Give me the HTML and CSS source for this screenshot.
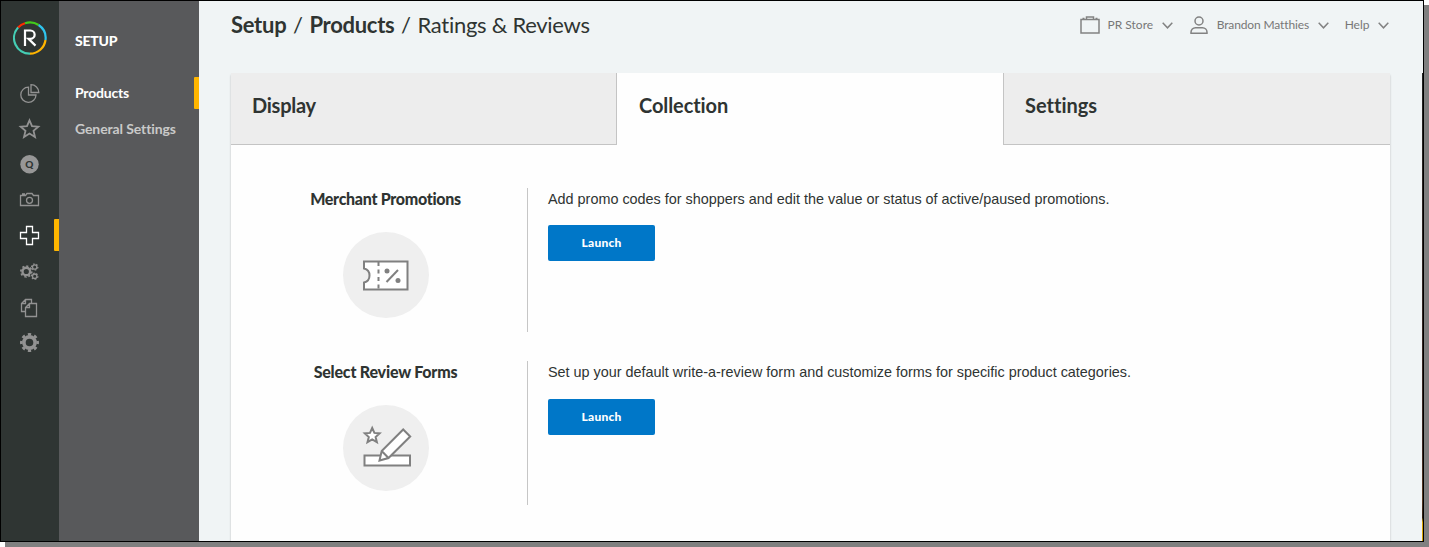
FILE: index.html
```html
<!DOCTYPE html>
<html lang="en">
<head>
<meta charset="utf-8">
<title>Setup / Products / Ratings &amp; Reviews</title>
<link rel="stylesheet" href="styles.css">
</head>
<body>
<div class="window">
  <nav class="rail">
    <svg class="logo" width="34" height="34" viewBox="0 0 34 34" fill="none">
      <g stroke-width="2.2">
        <path stroke="#ff2b00" d="M5.1 6.5A15.6 15.6 0 0 1 12 2.2"/>
        <path stroke="#43c91c" d="M12 2.2A15.6 15.6 0 0 1 25.6 4"/>
        <path stroke="#2fc4ee" d="M25.6 4A15.6 15.6 0 0 1 32.5 19"/>
        <path stroke="#ffb400" d="M32.5 19A15.6 15.6 0 0 1 17 32.6"/>
        <path stroke="#45cdb4" d="M17 32.6A15.6 15.6 0 0 1 5.1 6.5"/>
      </g>
      <path stroke="#fff" stroke-width="2.2" d="M12 25V9.5h5.5a4 4 0 0 1 0 8.3H15.5L22.5 24.6"/>
    </svg>
    <div class="rail-items">
      <a class="rail-item"><svg viewBox="0 0 32 32"><path d="M15.5 10.2A7.6 7.6 0 1 0 23 18h-7.5z"/><path d="M18 7.7v7.8h7.8A7.8 7.8 0 0 0 18 7.7z"/></svg></a>
      <a class="rail-item"><svg viewBox="0 0 32 32"><path stroke-width="1.8" d="M16.5 7.3l2.5 5.9 6.3.5-4.8 4.1 1.5 6.2-5.5-3.4-5.5 3.4 1.5-6.2-4.8-4.1 6.3-.5z"/></svg></a>
      <a class="rail-item"><svg viewBox="0 0 32 32"><circle class="solid" cx="16.5" cy="16.3" r="9.2"/><text class="q" x="16.4" y="20">Q</text></svg></a>
      <a class="rail-item"><svg viewBox="0 0 32 32"><path d="M7.5 11.5h5l1.5-2h5l1.5 2h5v10h-18zM9 10h3"/><circle cx="16.5" cy="16.3" r="3"/></svg></a>
      <a class="rail-item active"><svg viewBox="0 0 32 32"><path d="M13.5 7.5h6v6h6v6h-6v6h-6v-6h-6v-6h6z"/></svg></a>
      <a class="rail-item"><svg viewBox="0 0 32 32"><circle cx="13.3" cy="16.5" r="3.8" stroke-width="2.4"/><circle cx="13.3" cy="16.5" r="5.4" stroke-width="1.8" pathLength="16" stroke-dasharray="1 1"/><circle cx="21.7" cy="12" r="2.2"/><circle cx="21.7" cy="12" r="3.2" stroke-width="1.2" pathLength="12" stroke-dasharray="1 1"/><circle cx="21.7" cy="21.2" r="2.2"/><circle cx="21.7" cy="21.2" r="3.2" stroke-width="1.2" pathLength="12" stroke-dasharray="1 1"/></svg></a>
      <a class="rail-item"><svg viewBox="0 0 32 32"><path d="M12 20.5H8.5v-8l4-4h6v3.5M12.5 8.5v4h-4M12.500 25.500v-9l4-4h7v13zM16.500 12.500v4h-4"/></svg></a>
      <a class="rail-item"><svg viewBox="0 0 32 32"><circle cx="16.5" cy="15.5" r="5.6" stroke-width="3.6"/><circle cx="16.5" cy="15.5" r="8.2" stroke-width="2.6" pathLength="16" stroke-dasharray="1 1" transform="rotate(-11.25 16.5 15.5)"/></svg></a>
    </div>
  </nav>
  <aside class="subnav">
    <h2 class="subnav-title">SETUP</h2>
    <a class="subnav-link current">Products</a>
    <a class="subnav-link general">General Settings</a>
  </aside>
  <main class="main">
    <header class="topbar">
      <h1 class="crumbs"><b>Setup</b><i>/</i><b>Products</b><i>/</i><span>Ratings &amp; Reviews</span></h1>
      <div class="account">
        <svg class="case" width="20" height="18" viewBox="0 0 20 18"><path d="M1 3.5h18v13.5H1zM6.5 3V1h7v2M2.5 2.5h2M15.5 2.5h2"/></svg>
        <span class="store">PR Store</span>
        <svg class="chev" width="11" height="7" viewBox="0 0 11 7"><path d="M.7.8l4.8 5 4.8-5"/></svg>
        <svg class="user" width="18" height="18" viewBox="0 0 18 18"><circle cx="9" cy="5" r="4"/><path d="M1 17.2v-1a4.5 4.5 0 0 1 4.5-4.5h7a4.5 4.5 0 0 1 4.5 4.5v1z"/></svg>
        <span class="name">Brandon Matthies</span>
        <svg class="chev" width="11" height="7" viewBox="0 0 11 7"><path d="M.7.8l4.8 5 4.8-5"/></svg>
        <span class="help">Help</span>
        <svg class="chev" width="11" height="7" viewBox="0 0 11 7"><path d="M.7.8l4.8 5 4.8-5"/></svg>
      </div>
    </header>
    <section class="panel">
      <div class="tabs">
        <a class="tab">Display</a>
        <a class="tab selected">Collection</a>
        <a class="tab">Settings</a>
      </div>
      <div class="rows">
        <article class="feature">
          <div class="feature-side">
            <h3>Merchant Promotions</h3>
            <div class="disc"><svg width="86" height="86" viewBox="0 0 86 86"><path fill="#fff" d="M21 29.500h43.500v28H21v-7a7.200 7.200 0 0 0 0-14z"/><path stroke-dasharray="4 3.500" d="M35.500 30v28"/><path d="M43.500 50L55 38"/><circle class="dot" cx="44" cy="39" r="2.500"/><circle class="dot" cx="55" cy="48.500" r="2.500"/></svg></div>
          </div>
          <div class="feature-body">
            <p>Add promo codes for shoppers and edit the value or status of active/paused promotions.</p>
            <button class="launch">Launch</button>
          </div>
        </article>
        <article class="feature second">
          <div class="feature-side">
            <h3>Select Review Forms</h3>
            <div class="disc"><svg width="86" height="86" viewBox="0 0 86 86"><path fill="#fff" d="M21.500 50.500H67v10H21.500z"/><path fill="#fff" d="M29.200 23l2.200 4.900 5.200.5-4 3.600 1.300 5.200-4.700-2.700-4.700 2.700 1.300-5.200-4-3.600 5.200-.5z"/><path fill="#fff" d="M36.500 55.500l2.200-9.500 21.500-21.500 7 7L45.500 53zM38.700 46l6.800 7"/></svg></div>
          </div>
          <div class="feature-body">
            <p>Set up your default write-a-review form and customize forms for specific product categories.</p>
            <button class="launch">Launch</button>
          </div>
        </article>
      </div>
    </section>
  </main>
</div>
</body>
</html>
```
FILE: styles.css
```css
* { box-sizing: border-box; }
body { margin: 0; height: 547px; background: #fff; font-family: Lato, sans-serif; color: #2f3432; }
h1, h2, h3, p { margin: 0; }
svg { display: block; flex: none; }

.window {
  display: flex;
  width: 1424px;
  height: 542px;
  border: 1px solid #000;
  box-shadow: 5px 5px 0 #808080;
  position: relative;
}
.window::after {
  content: "";
  position: absolute;
  top: 72px;
  right: 0;
  bottom: 0;
  width: 1px;
  background: linear-gradient(#222 0, #3d2823 80%, #593a22 91%, #302015 95%, #d9a400 96%);
}

.rail { width: 58px; background: #2f3533; padding: 19.5px 0 0 12px; }
.logo { margin-bottom: 22.5px; }
.rail-items { display: grid; grid-template-rows: 36px 35px 36px 35px 36px 36px 36px 32px; }
.rail-item { display: flex; justify-content: space-between; height: 32px; }
.rail-item svg { width: 32px; height: 32px; fill: none; stroke: #929292; stroke-width: 1.3; }
.rail-item.active svg { stroke: #fff; }
.rail-item.active::after,
.subnav-link.current::after { content: ""; width: 5px; height: 32px; background: #ffb600; border-radius: 1px 0 0 1px; }
.rail-item .solid { fill: #979797; stroke: none; }
.rail-item .q { fill: #2f3533; stroke: none; font-size: 10px; font-weight: 900; text-anchor: middle; }

.subnav { width: 140px; background: #58595b; padding: 28px 0 0 16px; color: #fff; }
.subnav-title { height: 48px; font-size: 14px; line-height: 24px; font-weight: 900; letter-spacing: -.25px; }
.subnav-link { display: flex; justify-content: space-between; height: 32px; margin-bottom: 4px; font-size: 14px; line-height: 32px; color: #c9c9c9; white-space: nowrap; font-weight: 700; letter-spacing: -.2px; }
.subnav-link.current { color: #fff; }
.subnav-link.general { letter-spacing: -.1px; }

.main { flex: 1; background: #f0f4f5; padding: 0 33px 0 32px; display: flex; flex-direction: column; min-width: 0; }
.topbar { height: 72px; display: flex; justify-content: space-between; }
.crumbs { font-size: 22px; line-height: 48px; font-weight: 400; letter-spacing: -.28px; white-space: nowrap; display: flex; }
.crumbs i { font-style: normal; width: 23px; text-align: center; }
.account { display: flex; align-items: center; height: 48px; margin-right: 1px; font-size: 12px; line-height: 18px; color: #777; white-space: nowrap; }
.account svg { fill: none; stroke: #828282; stroke-width: 1.5; }
.case { margin-right: 8px; }
.user { margin: 0 9px 0 17px; }
.chev { margin-left: 8.5px; }
.name { letter-spacing: -.12px; }
.help { margin-left: 16px; }

.panel { flex: 1; background: #fefefe; box-shadow: 0 2px 2px rgba(0, 0, 0, .22); clip-path: inset(0 -3px 0 -3px); }
.tabs { display: grid; grid-template-columns: 386px 386px 1fr; height: 72px; }
.tab { background: #ededed; border-bottom: 1px solid #c4c4c4; padding: 20px 21px; font-size: 20px; line-height: 24px; font-weight: 700; font-variant-ligatures: none; }
.tab:first-child { border-right: 1px solid #c4c4c4; letter-spacing: -.25px; }
.tab:last-child { border-left: 1px solid #c4c4c4; }
.tab.selected { background: #fefefe; border: 0; padding-left: 22px; letter-spacing: -.1px; }
.rows { padding-top: 43px; }
.feature { display: flex; height: 144px; margin-bottom: 29px; }
.feature-side { width: 297px; border-right: 1px solid #c6c6c6; padding-left: 13px; display: flex; flex-direction: column; align-items: center; }
.feature-side h3 { font-size: 16px; line-height: 22px; height: 24px; font-weight: 900; letter-spacing: -.3px; white-space: nowrap; }
.feature.second h3 { letter-spacing: -.2px; }
.disc { width: 86px; height: 86px; margin-top: 20px; border-radius: 50%; background: #efefef; }
.disc svg { fill: none; stroke: #808080; stroke-width: 2; }
.disc .dot { fill: #808080; stroke: none; }
.feature-body { padding-left: 20px; }
.feature-body p { font: 14.4px/22px "Liberation Sans", Arial, sans-serif; white-space: nowrap; }
.launch { display: block; width: 107px; height: 36px; margin-top: 15px; padding: 0; border: 0; border-radius: 2px; background: #0077c8; color: #fff; font: 900 12px/36px Lato, sans-serif; letter-spacing: .2px; }
.second .launch { margin-top: 16px; }
```
